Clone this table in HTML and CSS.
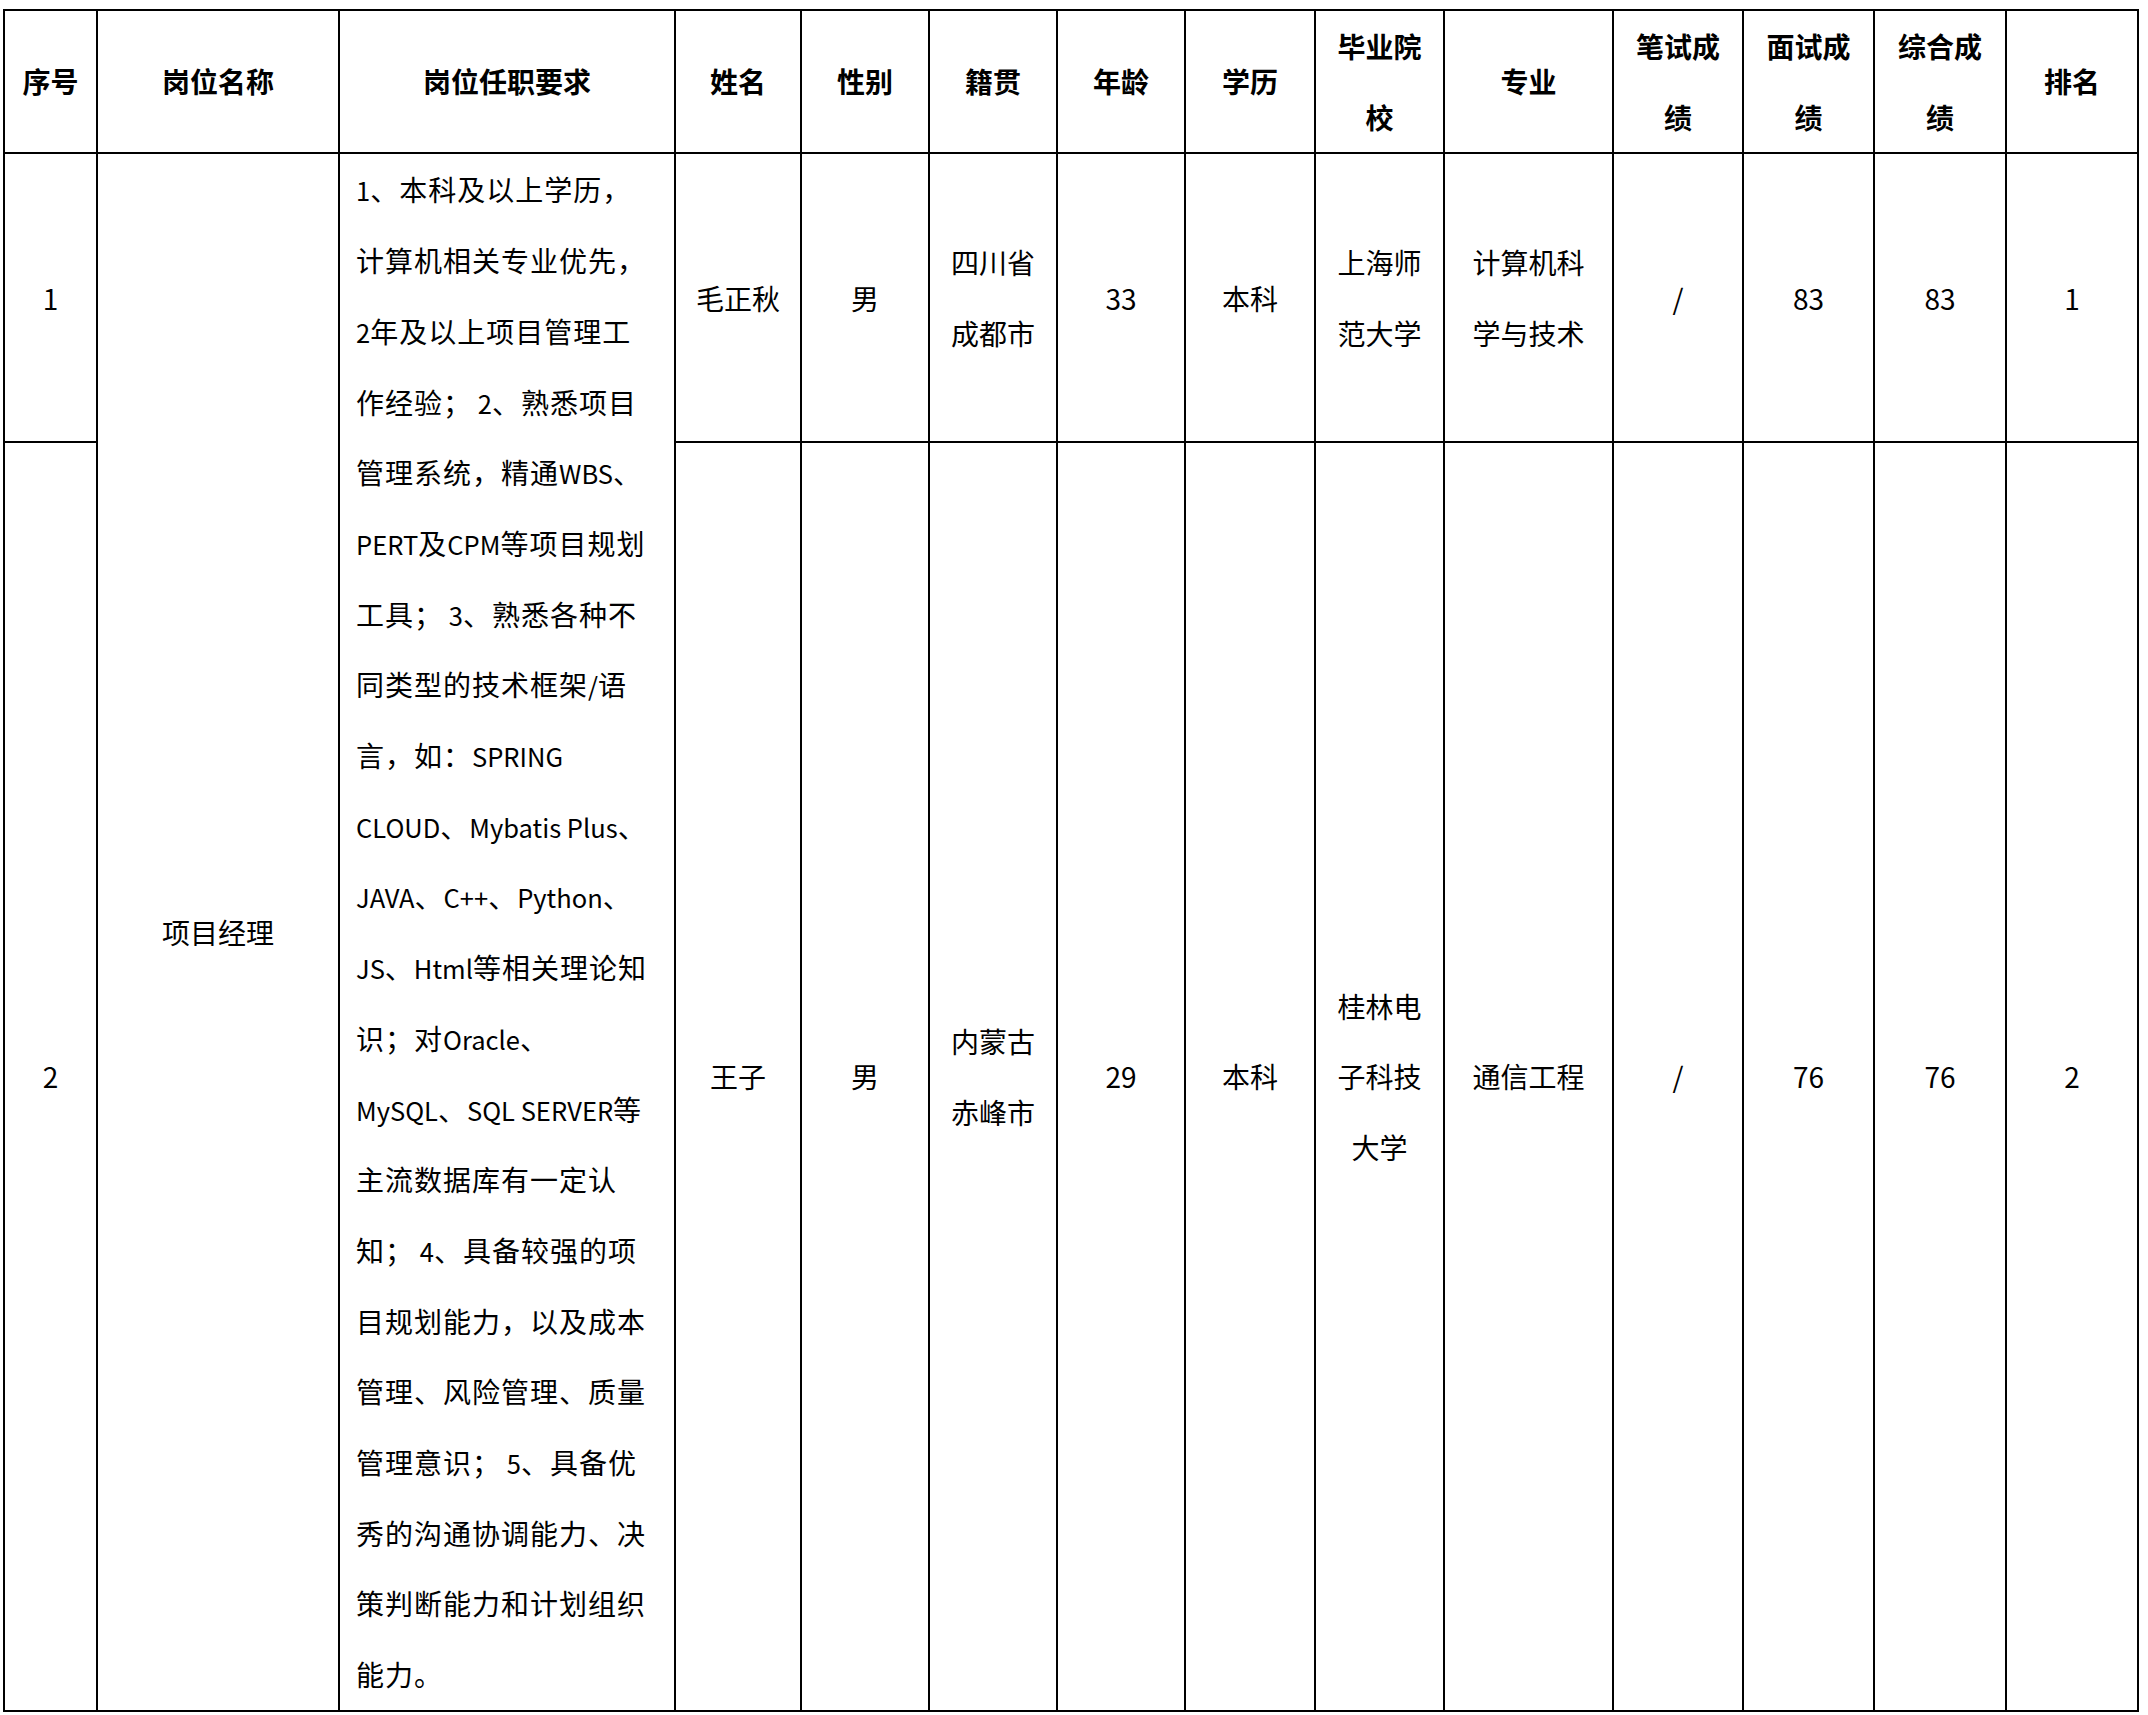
FILE: index.html
```html
<!DOCTYPE html>
<html lang="zh-CN">
<head>
<meta charset="utf-8">
<title>岗位招聘成绩表</title>
<link rel="stylesheet" href="styles.css">
</head>
<body>
<table class="grid">
  <colgroup>
    <col class="w-no">
    <col class="w-post">
    <col class="w-req">
    <col class="w-name">
    <col class="w-sex">
    <col class="w-home">
    <col class="w-age">
    <col class="w-edu">
    <col class="w-school">
    <col class="w-major">
    <col class="w-score">
    <col class="w-score2">
    <col class="w-score3">
    <col class="w-rank">
  </colgroup>
  <thead>
    <tr class="row-head">
      <th>序号</th>
      <th>岗位名称</th>
      <th>岗位任职要求</th>
      <th>姓名</th>
      <th>性别</th>
      <th>籍贯</th>
      <th>年龄</th>
      <th>学历</th>
      <th>毕业院<br>校</th>
      <th>专业</th>
      <th>笔试成<br>绩</th>
      <th>面试成<br>绩</th>
      <th>综合成<br>绩</th>
      <th>排名</th>
    </tr>
  </thead>
  <tbody>
    <tr class="row-one">
      <td class="num">1</td>
      <td rowspan="2">项目经理</td>
      <td rowspan="2" class="desc"><span class="lat">1</span>、本科及以上学历，<br>计算机相关专业优先，<br><span class="lat">2</span>年及以上项目管理工<br>作经验；<span class="lat"> 2</span>、熟悉项目<br>管理系统，精通<span class="lat">WBS</span>、<br><span class="lat">PERT</span>及<span class="lat">CPM</span>等项目规划<br>工具；<span class="lat"> 3</span>、熟悉各种不<br>同类型的技术框架<span class="lat">/</span>语<br>言，如：<span class="lat">SPRING</span><br><span class="lat">CLOUD</span>、<span class="lat">Mybatis Plus</span>、<br><span class="lat">JAVA</span>、<span class="lat">C++</span>、<span class="lat">Python</span>、<br><span class="lat">JS</span>、<span class="lat">Html</span>等相关理论知<br>识；对<span class="lat">Oracle</span>、<br><span class="lat">MySQL</span>、<span class="lat">SQL SERVER</span>等<br>主流数据库有一定认<br>知；<span class="lat"> 4</span>、具备较强的项<br>目规划能力，以及成本<br>管理、风险管理、质量<br>管理意识；<span class="lat"> 5</span>、具备优<br>秀的沟通协调能力、决<br>策判断能力和计划组织<br>能力。</td>
      <td>毛正秋</td>
      <td>男</td>
      <td>四川省<br>成都市</td>
      <td class="num">33</td>
      <td>本科</td>
      <td>上海师<br>范大学</td>
      <td>计算机科<br>学与技术</td>
      <td class="num">/</td>
      <td class="num">83</td>
      <td class="num">83</td>
      <td class="num">1</td>
    </tr>
    <tr class="row-two">
      <td class="num">2</td>
      <td>王子</td>
      <td>男</td>
      <td>内蒙古<br>赤峰市</td>
      <td class="num">29</td>
      <td>本科</td>
      <td>桂林电<br>子科技<br>大学</td>
      <td>通信工程</td>
      <td class="num">/</td>
      <td class="num">76</td>
      <td class="num">76</td>
      <td class="num">2</td>
    </tr>
  </tbody>
</table>
</body>
</html>
```

FILE: styles.css
```css
html, body {
  margin: 0;
  padding: 0;
  background: #ffffff;
}

body {
  font-family: "Noto Sans CJK SC", Lato, sans-serif;
  color: #000000;
}

.grid {
  margin: 9px 0 0 3px;
  width: 2136px;
  table-layout: fixed;
  border-collapse: collapse;
  font-size: 28px;
  line-height: 70.7px;
}

.w-no { width: 93px; }
.w-post { width: 242px; }
.w-req { width: 336px; }
.w-name { width: 126px; }
.w-sex { width: 128px; }
.w-home { width: 128px; }
.w-age { width: 128px; }
.w-edu { width: 130px; }
.w-school { width: 129px; }
.w-major { width: 169px; }
.w-score { width: 130px; }
.w-score2 { width: 131px; }
.w-score3 { width: 132px; }
.w-rank { width: 132px; }

.grid th,
.grid td {
  border: 2px solid #000000;
  padding: 0;
  text-align: center;
  vertical-align: middle;
  white-space: pre;
}

.grid th {
  font-weight: 700;
}

.grid td {
  font-weight: 400;
}

.row-head {
  height: 143px;
}

.row-one {
  height: 289px;
}

.grid td.desc {
  text-align: left;
  padding: 0 10px 0 16px;
  letter-spacing: 1px;
}

.grid td.desc .lat {
  font-size: 25.5px;
  line-height: 1;
  letter-spacing: 0;
}

.grid td.num {
  font-size: 28px;
}
```
